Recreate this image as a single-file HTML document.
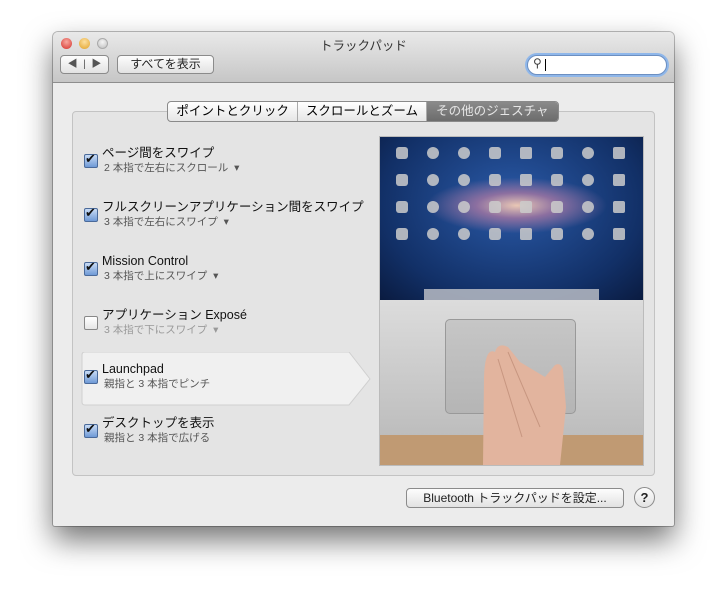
<!DOCTYPE html><html><head><meta charset="utf-8"><style>
body{margin:0;width:727px;height:600px;background:#fff;position:relative;overflow:hidden;font-family:"Liberation Sans","Noto Sans CJK JP",sans-serif;}
.win{position:absolute;left:53px;top:32px;width:621px;height:494px;background:#ececec;border-radius:5px 5px 2px 2px;box-shadow:0 14px 30px rgba(0,0,0,.55),0 0 0 1px rgba(0,0,0,.25);overflow:hidden}
.tb{position:absolute;left:0;top:0;width:621px;height:50px;background:linear-gradient(#e9e9e9,#c6c6c6);border-bottom:1px solid #8d8d8d}
.dot{position:absolute;top:6px;width:11px;height:11px;border-radius:50%}
.title{position:absolute;top:3px;width:100%;text-align:center;font-size:12.5px;color:#333}
.btn{position:absolute;background:linear-gradient(#fdfdfd,#e2e2e2);border:1px solid #8b8b8b;border-radius:4px;font-size:12px;color:#222;text-align:center;box-sizing:border-box;white-space:nowrap}
.box{position:absolute;left:19px;top:79px;width:581px;height:363px;background:#e4e4e4;border:1px solid #c3c3c3;border-radius:4px}
.tabs{position:absolute;left:114px;top:69px;height:19px;width:390px;display:flex;border:1px solid #8a8a8a;border-radius:4px;overflow:hidden;font-size:12.5px;background:linear-gradient(#fff,#e6e6e6)}
.tabs div{line-height:19px;text-align:center}
.it{position:absolute;font-size:12.5px;color:#111;white-space:nowrap;line-height:15px}
.it .s{font-size:10.5px;color:#555;margin-left:2px;margin-top:0}
.cb{position:absolute;left:31px;width:12px;height:12px;border:1px solid #4a6a9a;border-radius:2px;background:linear-gradient(#c9dcf5,#6f9ad6)}
.cb:after{content:"✔";position:absolute;left:0;top:-4px;font-size:13px;color:#111}
.cb.off{background:linear-gradient(#fff,#e6e6e6);border-color:#888}.cb.off:after{content:""}
.tx{left:49px}
</style></head><body>
<div class="win">
<div class="tb">
<div class="dot" style="left:8px;background:radial-gradient(circle at 50% 35%,#f8a9a0,#d5302a)"></div>
<div class="dot" style="left:26px;background:radial-gradient(circle at 50% 35%,#fde0a0,#e1a126)"></div>
<div class="dot" style="left:44px;background:radial-gradient(circle at 50% 35%,#f5f5f5,#bdbdbd);border:1px solid #aaa;width:9px;height:9px"></div>
<div class="title">トラックパッド</div>
<div class="btn" style="left:7px;top:23px;width:49px;height:19px;font-size:10px;color:#555;line-height:17px">◀ &nbsp;|&nbsp; ▶</div>
<div class="btn" style="left:64px;top:23px;width:97px;height:19px;line-height:17px">すべてを表示</div>
<div style="position:absolute;left:474px;top:23px;width:138px;height:18px;border-radius:10px;background:#fff;border:1px solid #6d8fc0;box-shadow:0 0 0 2px #8fb7ea"><span style="position:absolute;left:5px;top:0;font-size:12px;color:#444">⚲</span><span style="position:absolute;left:17px;top:3px;width:1px;height:12px;background:#000"></span></div>
</div>
<div class="box"></div>
<div class="tabs"><div style="width:130px;border-right:1px solid #aaa">ポイントとクリック</div><div style="width:128px;border-right:1px solid #aaa">スクロールとズーム</div><div style="width:132px;background:linear-gradient(#8a8a8a,#6c6c6c);color:#e6e6e6">その他のジェスチャ</div></div>
<svg style="position:absolute;left:28px;top:320px" width="290" height="54"><path d="M1 3 Q1 0 4 0 H268 L289 27 L268 53 H4 Q1 53 1 50Z" fill="#f0f0f0" stroke="#d0d0d0"/></svg>
<div style="position:absolute;left:0;top:114px;width:320px;height:320px">
<div class="cb" style="top:8px"></div><div class="tx it" style="top:0">ページ間をスワイプ<div class="s">2 本指で左右にスクロール &nbsp;▾</div></div>
<div class="cb" style="top:62px"></div><div class="tx it" style="top:54px">フルスクリーンアプリケーション間をスワイプ<div class="s">3 本指で左右にスワイプ &nbsp;▾</div></div>
<div class="cb" style="top:116px"></div><div class="tx it" style="top:108px">Mission Control<div class="s">3 本指で上にスワイプ &nbsp;▾</div></div>
<div class="cb off" style="top:170px"></div><div class="tx it" style="top:162px">アプリケーション Exposé<div class="s" style="color:#999">3 本指で下にスワイプ &nbsp;▾</div></div>
<div class="cb" style="top:224px"></div><div class="tx it" style="top:216px">Launchpad<div class="s">親指と 3 本指でピンチ</div></div>
<div class="cb" style="top:278px"></div><div class="tx it" style="top:270px">デスクトップを表示<div class="s">親指と 3 本指で広げる</div></div>
</div>
<div style="position:absolute;left:326px;top:104px;width:263px;height:328px;border:1px solid #bbb;overflow:hidden;background:#c9c9c9">
<div style="position:absolute;left:0;top:0;width:263px;height:163px;background:radial-gradient(ellipse 90px 28px at 52% 42%,#e9c7b5,#8c6fa0 45%,rgba(40,70,140,0) 100%),radial-gradient(ellipse at 50% 40%,#2a5aa8,#123067 70%,#0a1b40)"></div>
<svg style="position:absolute;left:0;top:0" width="263" height="163">
<g fill="#ccc" opacity=".85">
<g id="r"><rect x="16" y="10" width="12" height="12" rx="3"/><rect x="47" y="10" width="12" height="12" rx="6"/><rect x="78" y="10" width="12" height="12" rx="6"/><rect x="109" y="10" width="12" height="12" rx="3"/><rect x="140" y="10" width="12" height="12" rx="2"/><rect x="171" y="10" width="12" height="12" rx="3"/><rect x="202" y="10" width="12" height="12" rx="6"/><rect x="233" y="10" width="12" height="12" rx="2"/></g>
<use href="#r" y="27"/><use href="#r" y="54"/><use href="#r" y="81"/>
</g>
<rect x="44" y="152" width="175" height="11" fill="#b8bcc4" opacity=".85"/>
</svg>
<div style="position:absolute;left:0;top:163px;width:263px;height:135px;background:linear-gradient(#dcdcdc,#bdbdbd)"></div>
<div style="position:absolute;left:65px;top:182px;width:129px;height:93px;border-radius:5px;background:linear-gradient(#c6c6c6,#b5b5b5);border:1px solid #999"></div>
<div style="position:absolute;left:0;top:298px;width:263px;height:30px;background:#c09a73"></div>
<svg style="position:absolute;left:0;top:0" width="263" height="328"><path d="M103 328 L104 240 Q105 210 115 215 Q118 205 128 210 L140 225 L165 240 L175 228 Q181 225 183 233 L186 270 L180 328Z" fill="#e2b49e"/><path d="M118 222 L142 300 M128 215 L160 290" stroke="#c79680" fill="none"/></svg>
</div>
<div class="btn" style="left:353px;top:456px;width:218px;height:20px;line-height:18px">Bluetooth トラックパッドを設定...</div>
<div class="btn" style="left:581px;top:455px;width:21px;height:21px;border-radius:50%;line-height:19px;font-weight:bold;font-size:13px">?</div>
</div>
</body></html>
